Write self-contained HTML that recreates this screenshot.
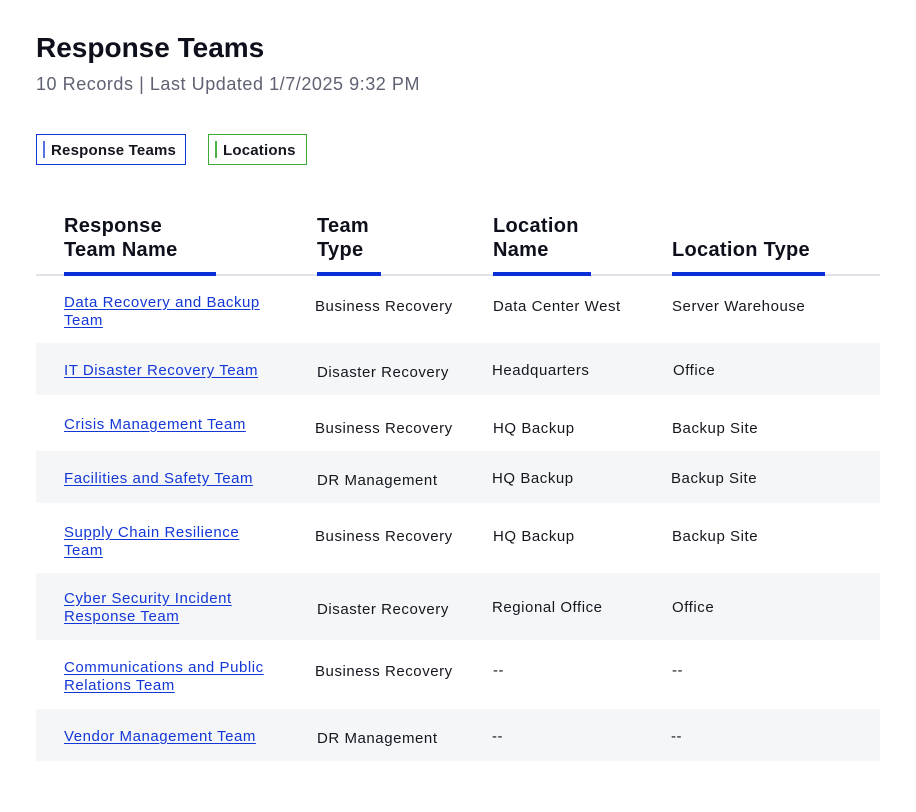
<!DOCTYPE html>
<html><head><style>
body{margin:0;width:916px;height:812px;background:#fff;font-family:"Liberation Sans",sans-serif;color:#15171f;position:relative;overflow:hidden}
.a{position:absolute;white-space:nowrap}
h1{position:absolute;left:36px;top:32px;margin:0;font-size:28px;font-weight:700;color:#0d0f1a}
.sub{left:36px;top:74px;font-size:18px;color:#5e6272;letter-spacing:0.55px}
.tab{position:absolute;top:134px;height:31px;border:1.5px solid;box-sizing:border-box;font-size:15px;font-weight:700;line-height:31px;padding-left:14px;letter-spacing:0.2px}
.hd{font-size:20px;font-weight:700;line-height:24px;color:#0d0f1a;letter-spacing:0.3px}
.ul{position:absolute;top:272px;height:4px;background:#0a2fd6}
.row{position:absolute;left:36px;width:844px;background:#f5f6f8}
.c{font-size:15px;line-height:18px;letter-spacing:0.55px;margin-top:2px}
.l{color:#1437d8;text-decoration:underline;text-underline-offset:2px}
</style></head><body>
<h1>Response Teams</h1>
<div class="a sub">10 Records | Last Updated 1/7/2025 9:32 PM</div>
<div class="tab" style="left:36px;width:150px;border-color:#1237d6">Response Teams</div>
<div class="tab" style="left:208px;width:99px;border-color:#3aaa35">Locations</div>
<div class="a" style="left:43px;top:141px;width:2px;height:17px;background:#5a72e0"></div>
<div class="a" style="left:215px;top:141px;width:2px;height:17px;background:#4cb447"></div>
<div class="a hd" style="left:64px;top:214px">Response<br>Team Name</div>
<div class="a hd" style="left:317px;top:214px">Team<br>Type</div>
<div class="a hd" style="left:493px;top:214px">Location<br>Name</div>
<div class="a hd" style="left:672px;top:238px">Location Type</div>
<div class="a" style="left:36px;top:274px;width:844px;height:2px;background:#e2e4ec"></div>
<div class="ul" style="left:64px;width:152px"></div>
<div class="ul" style="left:317px;width:64px"></div>
<div class="ul" style="left:493px;width:98px"></div>
<div class="ul" style="left:672px;width:153px"></div>
<div class="row" style="top:343px;height:52px"></div>
<div class="row" style="top:451px;height:52px"></div>
<div class="row" style="top:573px;height:67px"></div>
<div class="row" style="top:709px;height:52px"></div>

<div class="a c l" style="left:64px;top:292px">Data Recovery and Backup<br>Team</div>
<div class="a c" style="left:315px;top:296px">Business Recovery</div>
<div class="a c" style="left:493px;top:296px">Data Center West</div>
<div class="a c" style="left:672px;top:296px">Server Warehouse</div>

<div class="a c l" style="left:64px;top:360px">IT Disaster Recovery Team</div>
<div class="a c" style="left:317px;top:362px">Disaster Recovery</div>
<div class="a c" style="left:492px;top:360px">Headquarters</div>
<div class="a c" style="left:673px;top:360px">Office</div>

<div class="a c l" style="left:64px;top:414px">Crisis Management Team</div>
<div class="a c" style="left:315px;top:418px">Business Recovery</div>
<div class="a c" style="left:493px;top:418px">HQ Backup</div>
<div class="a c" style="left:672px;top:418px">Backup Site</div>

<div class="a c l" style="left:64px;top:468px">Facilities and Safety Team</div>
<div class="a c" style="left:317px;top:470px">DR Management</div>
<div class="a c" style="left:492px;top:468px">HQ Backup</div>
<div class="a c" style="left:671px;top:468px">Backup Site</div>

<div class="a c l" style="left:64px;top:522px">Supply Chain Resilience<br>Team</div>
<div class="a c" style="left:315px;top:526px">Business Recovery</div>
<div class="a c" style="left:493px;top:526px">HQ Backup</div>
<div class="a c" style="left:672px;top:526px">Backup Site</div>

<div class="a c l" style="left:64px;top:588px">Cyber Security Incident<br>Response Team</div>
<div class="a c" style="left:317px;top:599px">Disaster Recovery</div>
<div class="a c" style="left:492px;top:597px">Regional Office</div>
<div class="a c" style="left:672px;top:597px">Office</div>

<div class="a c l" style="left:64px;top:657px">Communications and Public<br>Relations Team</div>
<div class="a c" style="left:315px;top:661px">Business Recovery</div>
<div class="a c" style="left:493px;top:660px">--</div>
<div class="a c" style="left:672px;top:660px">--</div>

<div class="a c l" style="left:64px;top:726px">Vendor Management Team</div>
<div class="a c" style="left:317px;top:728px">DR Management</div>
<div class="a c" style="left:492px;top:726px">--</div>
<div class="a c" style="left:671px;top:726px">--</div>
</body></html>
